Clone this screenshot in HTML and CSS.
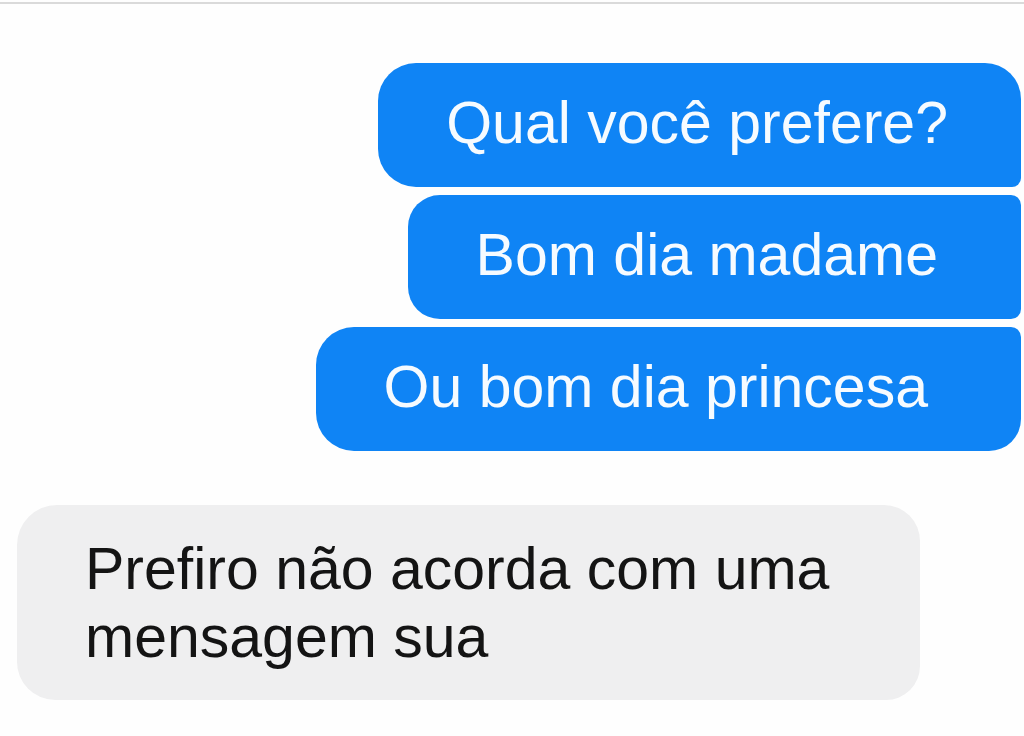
FILE: index.html
```html
<!DOCTYPE html>
<html lang="pt">
<head>
<meta charset="utf-8">
<title>Conversa</title>
<link rel="stylesheet" href="styles.css">
</head>
<body>
<div class="top-rule"></div>
<main class="thread">
  <section class="outgoing">
    <div class="bubble out first">Qual você prefere?</div>
    <div class="bubble out middle">Bom dia madame</div>
    <div class="bubble out last">Ou bom dia princesa</div>
  </section>
  <section class="incoming">
    <div class="bubble in">Prefiro não acorda com uma mensagem sua</div>
  </section>
</main>
</body>
</html>
```

FILE: styles.css
```css
html, body {
  margin: 0;
  padding: 0;
  background: #fefefe;
}

body {
  width: 1024px;
  height: 736px;
  overflow: hidden;
  font-family: "Liberation Sans", Arial, Helvetica, sans-serif;
}

.top-rule {
  margin-top: 2px;
  height: 2px;
  background: #dadada;
}

.thread {
  display: flex;
  flex-direction: column;
}

.outgoing {
  display: flex;
  flex-direction: column;
  align-items: flex-end;
  gap: 8px;
  margin-top: 59px;
  padding-right: 3px;
}

.bubble {
  font-size: 59px;
  white-space: nowrap;
}

.out {
  background: #0f84f5;
  color: #f6fbff;
  line-height: 120px;
  padding: 0 83px 4px 68px;
  box-sizing: border-box;
  height: 124px;
}

.out.first {
  padding-right: 73px;
  border-radius: 38px 36px 9px 38px;
}

.out.middle {
  border-radius: 32px 10px 10px 32px;
}

.out.last {
  padding-right: 93px;
  border-radius: 38px 10px 32px 38px;
}

.incoming {
  display: flex;
  margin-top: 54px;
  padding-left: 17px;
}

.in {
  box-sizing: border-box;
  width: 903px;
  white-space: normal;
  background: #efeff0;
  color: #141414;
  line-height: 68px;
  padding: 30px 40px 29px 68px;
  border-radius: 40px 36px 34px 38px;
}
```
